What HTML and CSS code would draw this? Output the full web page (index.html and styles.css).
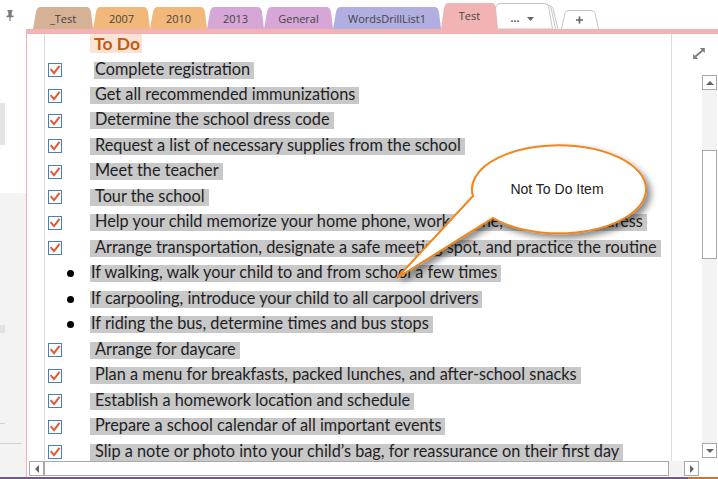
FILE: index.html
```html
<!DOCTYPE html>
<html lang="en">
<head>
<meta charset="utf-8">
<title>To Do</title>
<link rel="stylesheet" href="styles.css">
</head>
<body>
<svg class="defs" width="0" height="0" aria-hidden="true">
  <symbol id="chk" viewBox="0 0 14 14">
    <rect x="0.5" y="0.5" width="13" height="13" class="chk-box"/>
    <path d="M2.6 6.2 L6 10.2 L11.6 2.8" class="chk-mark"/>
  </symbol>
</svg>
<div class="window">
  <div class="main-row">
    <aside class="sidebar">
      <div class="side-top">
        <svg class="pin" viewBox="0 0 8 11"><rect x="1.5" y="0" width="5" height="1.6"/><rect x="2.3" y="1" width="3.4" height="5"/><rect x="0.5" y="5.6" width="7" height="1.6"/><rect x="3.4" y="7" width="1.2" height="4"/></svg>
      </div>
      <div class="side-tab"></div>
      <div class="side-gap"></div>
      <div class="side-list">
        <div class="side-mark"></div>
        <div class="side-rule short"></div>
        <div class="side-rule long"></div>
      </div>
    </aside>
    <main class="main">
      <nav class="tabs">
        <div class="tab tan w60">_Test</div>
        <div class="tab orange w57">2007</div>
        <div class="tab orange w57">2010</div>
        <div class="tab purple w57">2013</div>
        <div class="tab purple w69">General</div>
        <div class="tab lavender w108">WordsDrillList1</div>
        <div class="tab pink w57 active">Test</div>
        <svg class="tab-more" viewBox="0 0 72 26">
          <path class="tm-back" d="M12 2.5 L58 2.5 Q62 2.5 63 5.5 L68 26"/>
          <path class="tm-back" d="M10 1.5 L56 1.5 Q60 1.5 61 4.5 L65.5 26"/>
          <path class="tm-front" d="M2 26 L6 3.5 Q7 0.5 10 0.5 L54 0.5 Q57.5 0.5 58.5 3.5 L62.5 26 Z"/>
          <text class="tm-dots" x="20.5" y="18.5">...</text>
          <polygon class="tm-caret" points="37,14 44,14 40.5,18"/>
        </svg>
        <svg class="tab-add" viewBox="0 0 40 19">
          <path class="ta-shape" d="M0.5 19 L4 3 Q5 0.5 8 0.5 L30 0.5 Q33 0.5 34 3 L37.5 19"/>
          <path class="ta-plus" d="M15 10 H22 M18.5 6.5 V13.5"/>
        </svg>
      </nav>
      <div class="page-bar"></div>
      <section class="page">
        <div class="page-body">
          <div class="canvas">
            <div class="notes">
              <div class="heading"><span class="heading-text">To Do</span></div>
              <ul class="list">
                <li class="row check"><svg class="chk"><use href="#chk"/></svg><span class="hl tight">Complete registration</span></li>
                <li class="row check"><svg class="chk"><use href="#chk"/></svg><span class="hl">Get all recommended immunizations</span></li>
                <li class="row check"><svg class="chk"><use href="#chk"/></svg><span class="hl">Determine the school dress code</span></li>
                <li class="row check"><svg class="chk"><use href="#chk"/></svg><span class="hl">Request a list of necessary supplies from the school</span></li>
                <li class="row check"><svg class="chk"><use href="#chk"/></svg><span class="hl">Meet the teacher</span></li>
                <li class="row check"><svg class="chk"><use href="#chk"/></svg><span class="hl">Tour the school</span></li>
                <li class="row check"><svg class="chk"><use href="#chk"/></svg><span class="hl">Help your child memorize your home phone, work phone, cell phone, address</span></li>
                <li class="row check"><svg class="chk"><use href="#chk"/></svg><span class="hl">Arrange transportation, designate a safe meeting spot, and practice the routine</span></li>
                <li class="row bullet"><span class="dot"></span><span class="hl">If walking, walk your child to and from school a few times</span></li>
                <li class="row bullet"><span class="dot"></span><span class="hl">If carpooling, introduce your child to all carpool drivers</span></li>
                <li class="row bullet"><span class="dot"></span><span class="hl">If riding the bus, determine times and bus stops</span></li>
                <li class="row check"><svg class="chk"><use href="#chk"/></svg><span class="hl">Arrange for daycare</span></li>
                <li class="row check"><svg class="chk"><use href="#chk"/></svg><span class="hl">Plan a menu for breakfasts, packed lunches, and after-school snacks</span></li>
                <li class="row check"><svg class="chk"><use href="#chk"/></svg><span class="hl">Establish a homework location and schedule</span></li>
                <li class="row check"><svg class="chk"><use href="#chk"/></svg><span class="hl">Prepare a school calendar of all important events</span></li>
                <li class="row check"><svg class="chk"><use href="#chk"/></svg><span class="hl">Slip a note or photo into your child’s bag, for reassurance on their first day</span></li>
              </ul>
            </div>
          </div>
          <div class="rail">
            <svg class="expand" viewBox="0 0 12 11">
              <path class="ex-line" d="M2.5 8.5 L9.5 2.5"/>
              <polygon class="ex-head" points="11.8,0 11.8,5 6.8,0"/>
              <polygon class="ex-head" points="0.2,11 0.2,6 5.2,11"/>
            </svg>
            <div class="vscroll">
              <div class="sb-btn"><span class="tri-up"></span></div>
              <div class="vthumb"></div>
              <div class="sb-fill"></div>
              <div class="sb-btn"><span class="tri-down"></span></div>
            </div>
          </div>
        </div>
        <div class="hscroll">
          <div class="sb-btn"><span class="tri-left"></span></div>
          <div class="hthumb"></div>
          <div class="sb-fill"></div>
          <div class="sb-btn"><span class="tri-right"></span></div>
        </div>
      </section>
    </main>
  </div>
  <div class="status-line"></div>
  <svg class="callout" viewBox="380 130 320 170">
    <defs>
      <filter id="shadow" x="-30%" y="-30%" width="160%" height="170%">
        <feDropShadow dx="4" dy="4" stdDeviation="3" flood-color="#000" flood-opacity="0.45"/>
      </filter>
    </defs>
    <path class="bubble" d="M473 196 L397 278 L493 218 A87 44 0 1 0 473 196 Z"/>
    <text class="bubble-text" x="557" y="194">Not To Do Item</text>
  </svg>
</div>
</body>
</html>
```

FILE: styles.css
```css
* { box-sizing: border-box; }
html, body { margin: 0; padding: 0; }
body {
  width: 718px;
  height: 479px;
  overflow: hidden;
  background: #fff;
  font-family: "Open Sans", "Liberation Sans", sans-serif;
}
.defs { position: absolute; width: 0; height: 0; }
.chk-box { fill: #fff; stroke: #4a7ebb; stroke-width: 1; }
.chk-mark { fill: none; stroke: #e0593b; stroke-width: 2; }

.window {
  position: relative;
  width: 718px;
  height: 479px;
  display: flex;
  flex-direction: column;
}
.main-row { flex: 1; display: flex; min-height: 0; }
.status-line {
  height: 2px;
  background: linear-gradient(to right, #6e5b84 0, #6e5b84 688px, #c4763a 688px);
}

/* sidebar */
.sidebar { width: 26px; flex: none; display: flex; flex-direction: column; }
.side-top { height: 103px; padding: 10px 0 0 6px; }
.pin { display: block; width: 8px; height: 11px; fill: #7a7a7a; }
.side-tab { width: 5px; height: 42px; background: #e4e4e4; }
.side-gap { height: 48px; }
.side-list {
  flex: 1;
  background: #f3f3f3;
  padding-top: 132px;
  display: flex;
  flex-direction: column;
}
.side-mark { width: 5px; height: 8px; background: #e1e1e1; }
.side-rule { height: 1px; background: #d2d2d2; }
.side-rule.short { width: 5px; margin-top: 90px; }
.side-rule.long { width: 22px; margin-top: 19px; }

/* main */
.main { flex: 1; display: flex; flex-direction: column; min-width: 0; }
.tabs {
  height: 29px;
  display: flex;
  align-items: flex-end;
  padding-left: 7px;
}
.tab {
  height: 22px;
  flex: none;
  display: flex;
  align-items: center;
  justify-content: center;
  font-size: 11px;
  color: #444;
  padding-top: 1px;
  clip-path: polygon(0 100%, 3px 5px, 4px 2px, 5.5px 0.5px, 7px 0, calc(100% - 6px) 0, calc(100% - 4.5px) 0.5px, calc(100% - 3px) 2px, calc(100% - 2px) 5px, 100% 100%);
}
.tab.active { height: 26px; z-index: 2; padding-top: 0; padding-bottom: 1px; }
.w57 { width: 57px; }
.w60 { width: 60px; }
.w69 { width: 69px; }
.w108 { width: 108px; }
.tan { background: #d5b196; }
.orange { background: #f2b77a; }
.purple { background: #d6a6d6; }
.lavender { background: #b1aee1; }
.pink { background: #f1b3b3; }

.tab-more {
  flex: none;
  width: 72px;
  height: 26px;
  margin-left: -8px;
  z-index: 1;
}
.tm-back { fill: #fff; stroke: #c4c4c4; stroke-width: 1; }
.tm-front { fill: #fff; stroke: #c4c4c4; stroke-width: 1; }
.tm-dots { font-family: "Liberation Sans", sans-serif; font-weight: bold; font-size: 11px; fill: #555; }
.tm-caret { fill: #666; }
.tab-add {
  flex: none;
  width: 40px;
  height: 19px;
  margin-left: -1px;
}
.ta-shape { fill: #fff; stroke: #c4c4c4; stroke-width: 1; }
.ta-plus { stroke: #666; stroke-width: 1.7; fill: none; }

.page-bar { height: 5px; background: #f1b3b3; }

.page {
  flex: 1;
  display: flex;
  flex-direction: column;
  border-left: 1px solid #f1b3b3;
  padding-bottom: 1px;
  min-height: 0;
}
.page-body { flex: 1; display: flex; min-height: 0; }
.canvas { flex: 1; padding-left: 17px; min-width: 0; }
.notes {
  height: 100%;
  border-left: 1px solid #dcdcdc;
  border-right: 1px solid #dcdcdc;
  overflow: hidden;
  font-family: "Lato", "Open Sans", sans-serif;
  font-size: 16.3px;
  color: #1e1e24;
}
.heading { height: 19px; margin-bottom: 4.3px; padding-left: 45px; }
.heading-text {
  display: inline-block;
  height: 19px;
  width: 52px;
  padding-left: 4px;
  line-height: 19px;
  font-size: 17.5px;
  font-weight: 700;
  color: #c55a11;
  background: #fbe4d5;
}
.list { list-style: none; margin: 0; padding: 0; }
.row {
  height: 25.47px;
  display: flex;
  align-items: center;
  white-space: nowrap;
}
.row.check { padding-left: 3px; }
.chk { width: 14px; height: 14px; flex: none; }
.hl {
  display: inline-block;
  height: 17px;
  line-height: 14px;
  padding: 0 4px 3px 5px;
  background: #c8c8c8;
  flex: none;
}
.row.check .hl { margin-left: 28px; }
.row.check .hl.tight { margin-left: 32px; padding-left: 1px; }
.dot {
  width: 7px;
  height: 7px;
  border-radius: 50%;
  background: #000;
  margin-left: 22px;
  flex: none;
}
.row.bullet .hl { margin-left: 16px; padding-left: 1px; }

/* right rail */
.rail {
  width: 46px;
  flex: none;
  display: flex;
  flex-direction: column;
  padding-top: 14px;
}
.expand { width: 12px; height: 11px; margin-left: 21px; flex: none; }
.ex-line { stroke: #7a7a7a; stroke-width: 1.7; fill: none; }
.ex-head { fill: #7a7a7a; }
.vscroll {
  width: 15px;
  height: 383px;
  margin-top: 16px;
  margin-right: 1px;
  align-self: flex-end;
  display: flex;
  flex-direction: column;
  background: #f3f3f3;
}
.sb-btn {
  width: 15px;
  height: 15px;
  flex: none;
  background: #fff;
  border: 1px solid #a8a8a8;
  display: flex;
  align-items: center;
  justify-content: center;
}
.sb-fill { flex: 1; }
.vthumb {
  margin-top: 60px;
  height: 109px;
  flex: none;
  background: #fff;
  border: 1px solid #a8a8a8;
}
.tri-up { width: 0; height: 0; border-left: 4px solid transparent; border-right: 4px solid transparent; border-bottom: 4px solid #666; }
.tri-down { width: 0; height: 0; border-left: 4px solid transparent; border-right: 4px solid transparent; border-top: 4px solid #666; }
.tri-left { width: 0; height: 0; border-top: 4px solid transparent; border-bottom: 4px solid transparent; border-right: 4px solid #666; }
.tri-right { width: 0; height: 0; border-top: 4px solid transparent; border-bottom: 4px solid transparent; border-left: 4px solid #666; }

.hscroll {
  width: 670px;
  height: 15px;
  margin-left: 2px;
  display: flex;
  background: #f3f3f3;
  flex: none;
}
.hthumb {
  width: 625px;
  flex: none;
  background: #fff;
  border: 1px solid #a8a8a8;
}

/* callout */
.callout {
  position: absolute;
  left: 380px;
  top: 130px;
  width: 320px;
  height: 170px;
  overflow: visible;
}
.bubble { fill: #fff; stroke: #f0861f; stroke-width: 2; stroke-linejoin: miter; filter: url(#shadow); }
.bubble-text {
  font-family: "Liberation Sans", Arial, sans-serif;
  font-size: 14px;
  fill: #222;
  text-anchor: middle;
}
```
